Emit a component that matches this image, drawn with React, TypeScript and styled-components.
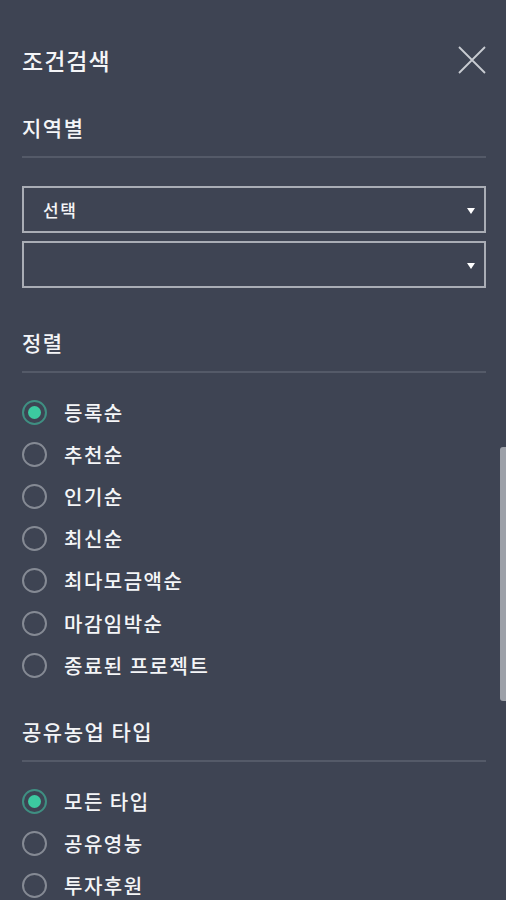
import React from 'react';
import styled, { createGlobalStyle } from 'styled-components';

const GlobalStyle = createGlobalStyle`
    html, body {
        margin: 0;
        padding: 0;
        background: #3e4453;
    }
    body {
        font-family: "Noto Sans CJK KR", "Noto Sans", sans-serif;
        color: #f4f5f7;
        overflow: hidden;
    }
`;

const Panel = styled.div`
    position: relative;
    width: 506px;
    height: 900px;
    box-sizing: border-box;
    padding: 45px 20px 0 22px;
    background: #3e4453;
    overflow: hidden;
`;

const Header = styled.div`
    display: flex;
    align-items: center;
    justify-content: space-between;
    height: 30px;
`;

const Title = styled.h1`
    margin: 0;
    font-size: 23px;
    font-weight: 500;
    line-height: 30px;
    letter-spacing: 1px;
`;

const CloseButton = styled.button`
    width: 28px;
    height: 28px;
    padding: 0;
    border: 0;
    background: none;
    display: flex;
    align-items: center;
    justify-content: center;
    cursor: pointer;
`;

const SectionTitle = styled.h2<{ $top: number }>`
    margin: ${({ $top }) => `${$top}px`} 0 0;
    padding-bottom: 15px;
    border-bottom: 2px solid #545a68;
    font-size: 21px;
    font-weight: 500;
    line-height: 28px;
    letter-spacing: 1.5px;
`;

const SelectGroup = styled.div`
    display: flex;
    flex-direction: column;
    gap: 8px;
    margin-top: 28px;
`;

const SelectBox = styled.div`
    position: relative;
    height: 47px;
    box-sizing: border-box;
    border: 2px solid #a9adb5;
    display: flex;
    align-items: center;
    padding: 0 30px 0 19px;
    font-size: 17px;
    font-weight: 500;
    letter-spacing: 1.5px;
    color: #f4f5f7;
`;

const Caret = styled.span`
    position: absolute;
    right: 9px;
    top: 50%;
    margin-top: -2px;
    width: 0;
    height: 0;
    border-left: 4px solid transparent;
    border-right: 4px solid transparent;
    border-top: 6px solid #ffffff;
`;

const RadioList = styled.div<{ $top: number }>`
    display: flex;
    flex-direction: column;
    margin-top: ${({ $top }) => `${$top}px`};
`;

const RadioRow = styled.label`
    display: flex;
    align-items: center;
    gap: 17px;
    height: 42.2px;
    font-size: 20px;
    font-weight: 500;
    letter-spacing: 1.5px;
    cursor: pointer;
`;

const RadioCircle = styled.span<{ $checked: boolean }>`
    width: 25px;
    height: 25px;
    box-sizing: border-box;
    border-radius: 50%;
    border: 2px solid ${({ $checked }) => ($checked ? '#3f8f82' : '#858a94')};
    display: flex;
    align-items: center;
    justify-content: center;

    &::after {
        content: '';
        display: ${({ $checked }) => ($checked ? 'block' : 'none')};
        width: 13px;
        height: 13px;
        border-radius: 50%;
        background: #3ccaa0;
    }
`;

const Scrollbar = styled.div`
    position: absolute;
    right: 0;
    top: 447px;
    width: 6px;
    height: 254px;
    border-radius: 3px 0 0 3px;
    background: #9ca0a8;
`;

const Radio: React.FC<{ label: string; checked?: boolean }> = ({
    label,
    checked = false,
}) => (
    <RadioRow>
        <RadioCircle $checked={checked} />
        <span>{label}</span>
    </RadioRow>
);

const sortOptions = [
    '등록순',
    '추천순',
    '인기순',
    '최신순',
    '최다모금액순',
    '마감임박순',
    '종료된 프로젝트',
];

const typeOptions = ['모든 타입', '공유영농', '투자후원'];

export default function App() {
    return (
        <>
            <GlobalStyle />
            <Panel>
                <Header>
                    <Title>조건검색</Title>
                    <CloseButton aria-label="닫기">
                        <svg width="28" height="28" viewBox="0 0 28 28">
                            <path
                                d="M1 1 L27 27 M27 1 L1 27"
                                stroke="#c9ccd2"
                                strokeWidth="1.8"
                                fill="none"
                            />
                        </svg>
                    </CloseButton>
                </Header>

                <SectionTitle $top={38}>지역별</SectionTitle>
                <SelectGroup>
                    <SelectBox>
                        선택
                        <Caret />
                    </SelectBox>
                    <SelectBox>
                        <Caret />
                    </SelectBox>
                </SelectGroup>

                <SectionTitle $top={40}>정렬</SectionTitle>
                <RadioList $top={18}>
                    {sortOptions.map((option, i) => (
                        <Radio key={option} label={option} checked={i === 0} />
                    ))}
                </RadioList>

                <SectionTitle $top={31}>공유농업 타입</SectionTitle>
                <RadioList $top={18}>
                    {typeOptions.map((option, i) => (
                        <Radio key={option} label={option} checked={i === 0} />
                    ))}
                </RadioList>

                <Scrollbar />
            </Panel>
        </>
    );
}
